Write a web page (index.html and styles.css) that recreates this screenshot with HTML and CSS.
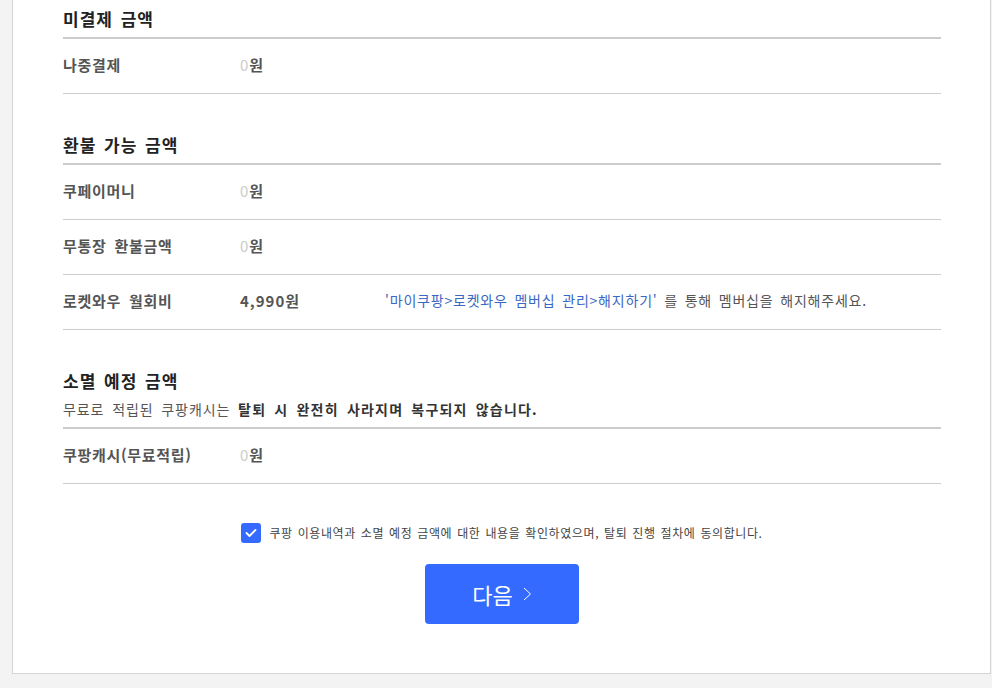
FILE: index.html
```html
<!DOCTYPE html>
<html lang="ko">
<head>
    <meta charset="UTF-8">
    <meta name="viewport" content="width=device-width, initial-scale=1.0">
    <title>회원 탈퇴</title>
    <link rel="stylesheet" href="styles.css">
</head>
<body>
    <div class="card">
        <!-- 미결제 금액 -->
        <div class="section">
            <h3 class="section-title">미결제 금액</h3>
            <div class="row">
                <span class="label">나중결제</span>
                <span class="value"><em class="zero">0</em>원</span>
            </div>
        </div>

        <!-- 환불 가능 금액 -->
        <div class="section">
            <h3 class="section-title">환불 가능 금액</h3>
            <div class="row">
                <span class="label">쿠페이머니</span>
                <span class="value"><em class="zero">0</em>원</span>
            </div>
            <div class="row">
                <span class="label">무통장 환불금액</span>
                <span class="value"><em class="zero">0</em>원</span>
            </div>
            <div class="row">
                <span class="label">로켓와우 월회비</span>
                <span class="value">4,990원</span>
                <span class="note"><span class="link">'마이쿠팡&gt;로켓와우 멤버십 관리&gt;해지하기'</span> 를 통해 멤버십을 해지해주세요.</span>
            </div>
        </div>

        <!-- 소멸 예정 금액 -->
        <div class="section">
            <div class="section-head">
                <h3 class="section-title plain">소멸 예정 금액</h3>
                <p class="desc">무료로 적립된 쿠팡캐시는 <strong>탈퇴 시 완전히 사라지며 복구되지 않습니다.</strong></p>
            </div>
            <div class="row">
                <span class="label">쿠팡캐시(무료적립)</span>
                <span class="value"><em class="zero">0</em>원</span>
            </div>
        </div>

        <label class="agree">
            <input type="checkbox" checked>
            <span class="checkmark">
                <svg width="12" height="10" viewBox="0 0 12 10"><polyline points="1.5,5 4.5,8 10.5,2" fill="none" stroke="#fff" stroke-width="1.8" stroke-linecap="round" stroke-linejoin="round"/></svg>
            </span>
            <span class="agree-text">쿠팡 이용내역과 소멸 예정 금액에 대한 내용을 확인하였으며, 탈퇴 진행 절차에 동의합니다.</span>
        </label>

        <div class="actions">
            <button type="button" class="btn-next">다음
                <svg width="9" height="14" viewBox="0 0 9 14"><polyline points="1,1 7.5,7 1,13" fill="none" stroke="#fff" stroke-width="1"/></svg>
            </button>
        </div>
    </div>
</body>
</html>
```

FILE: styles.css
```css
/* 탈퇴 안내 페이지 */
body {
    margin: 0;
    padding: 0;
    background-color: #f3f3f3;
    font-family: "Noto Sans CJK KR", "Liberation Sans", sans-serif;
    color: #333;
}
.card {
    box-sizing: border-box;
    width: 979px;
    margin-left: 12px;
    padding: 7px 49px 49px 50px;
    background-color: #fff;
    border: 1px solid #d4d4d4;
    border-top: none;
}
.section + .section {
    margin-top: 39px;
}
.section-title {
    margin: 0;
    padding-bottom: 6px;
    border-bottom: 2px solid #ccc;
    font-size: 17px;
    line-height: 24px;
    font-weight: bold;
    color: #222;
    letter-spacing: 1px;
    word-spacing: 2px;
}
.section-head {
    padding-bottom: 6px;
    border-bottom: 2px solid #ccc;
}
.section-title.plain {
    padding-bottom: 0;
    border-bottom: none;
}
.desc {
    margin: 4px 0 0;
    font-size: 14px;
    line-height: 24px;
    color: #555;
    letter-spacing: 0.9px;
    word-spacing: 3px;
}
.desc strong {
    color: #333;
    letter-spacing: 1.2px;
}
.row {
    display: flex;
    align-items: center;
    height: 50px;
    padding-bottom: 4px;
    border-bottom: 1px solid #ccc;
}
.label {
    width: 177px;
    font-size: 15px;
    font-weight: bold;
    color: #555;
    letter-spacing: 0.7px;
    word-spacing: 3px;
}
.value {
    width: 145px;
    font-size: 15px;
    font-weight: bold;
    color: #555;
    letter-spacing: 1px;
}
.zero {
    font-style: normal;
    font-weight: normal;
    color: #ccc;
}
.note {
    font-size: 14px;
    color: #555;
    letter-spacing: 0.8px;
    word-spacing: 2px;
}
.link {
    color: #3a66c4;
}
.agree {
    display: flex;
    align-items: center;
    justify-content: center;
    gap: 8px;
    margin-top: 39px;
    cursor: pointer;
}
.agree input {
    display: none;
}
.checkmark {
    display: flex;
    align-items: center;
    justify-content: center;
    width: 20px;
    height: 20px;
    border-radius: 3px;
    background-color: #346aff;
}
.agree-text {
    font-size: 12px;
    line-height: 20px;
    color: #444;
    letter-spacing: 0.6px;
    word-spacing: 1px;
}
.actions {
    display: flex;
    justify-content: center;
    margin-top: 21px;
}
.btn-next {
    display: flex;
    align-items: center;
    justify-content: center;
    gap: 10px;
    width: 154px;
    height: 60px;
    padding: 0;
    border: none;
    border-radius: 4px;
    background-color: #346aff;
    color: #fff;
    font-family: "Noto Sans CJK KR", "Liberation Sans", sans-serif;
    font-size: 22px;
    cursor: pointer;
}
```
